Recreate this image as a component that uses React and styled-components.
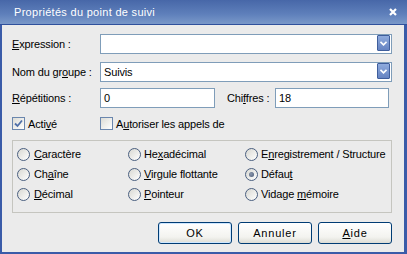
import React from "react";
import styled, { createGlobalStyle } from "styled-components";

const GlobalStyle = createGlobalStyle`
  html, body {
    margin: 0;
    padding: 0;
    background: #ebebeb;
  }
  body {
    font-family: "Liberation Sans", Arial, sans-serif;
    font-size: 11px;
    letter-spacing: -0.15px;
    color: #000;
  }
`;

const Window = styled.div`
  width: 407px;
  height: 254px;
  display: flex;
  flex-direction: column;
  box-sizing: border-box;
  background: #ebebeb;
`;

const TitleBar = styled.div`
  flex: none;
  height: 24px;
  display: flex;
  align-items: center;
  justify-content: space-between;
  padding: 0 10px 0 14px;
  background: linear-gradient(#4767a8, #5f80bb 60%, #7a98c9);
  border-bottom: 1px solid #2f509c;
  color: #fff;
  font-size: 11px;
  letter-spacing: 0.3px;
`;

const Close = styled.svg`
  width: 8px;
  height: 8px;
`;

const Body = styled.div`
  flex: 1;
  display: flex;
  flex-direction: column;
  padding: 9px 12px 0 10px;
  border-left: 2px solid #3a5ba8;
  border-right: 3px solid #3a5ba8;
  border-bottom: 2px solid #3a5ba8;
`;

const Row = styled.div`
  display: flex;
  align-items: center;
  height: ${({ $h }) => $h || 20}px;
  margin-top: ${({ $top }) => $top || 0}px;
`;

const Label = styled.label`
  flex: none;
  width: ${({ $w }) => $w}px;
  margin-left: ${({ $ml }) => $ml || 0}px;
  white-space: nowrap;
`;

const Text = styled.span`
  white-space: pre;
`;

const U = styled.span`
  text-decoration: underline;
  text-underline-offset: 1px;
`;

const Field = styled.div`
  position: relative;
  box-sizing: border-box;
  height: 20px;
  flex: ${({ $w }) => ($w ? "none" : 1)};
  width: ${({ $w }) => ($w ? `${$w}px` : "auto")};
  margin-right: ${({ $mr }) => $mr || 0}px;
  border: 1px solid #7f9db9;
  background: #fff;
  display: flex;
  align-items: center;
  padding-left: 3px;
`;

const DropButton = styled.div`
  position: absolute;
  right: 1px;
  top: 0px;
  width: 13px;
  height: 16px;
  box-sizing: border-box;
  border: 1px solid #3f5e9c;
  border-radius: 1px;
  background: linear-gradient(#8fabdd, #6583c2);
  display: flex;
  align-items: center;
  justify-content: center;
`;

const Check = styled.div`
  flex: none;
  width: 13px;
  height: 13px;
  box-sizing: border-box;
  border: 1px solid #6a86ad;
  background: linear-gradient(135deg, #dcdcd6, #fff);
  display: flex;
  align-items: center;
  justify-content: center;
  margin-right: 3px;
`;

const CheckItem = styled.div`
  display: flex;
  align-items: center;
  width: ${({ $w }) => ($w ? `${$w}px` : "auto")};
  white-space: nowrap;
`;

const Group = styled.div`
  box-sizing: border-box;
  height: 73px;
  margin-top: 10px;
  border: 1px solid #c5c5bf;
  display: grid;
  grid-template-columns: 111px 117px 1fr;
  grid-auto-rows: 20px;
  padding: 3px 0 0 4px;
`;

const RadioItem = styled.div`
  display: flex;
  align-items: center;
  white-space: nowrap;
`;

const Radio = styled.div`
  flex: none;
  width: 13px;
  height: 13px;
  box-sizing: border-box;
  border-radius: 50%;
  border: 1px solid #4a5f80;
  background: linear-gradient(135deg, #d8d8d2, #fff);
  margin-right: ${({ $gap }) => $gap}px;
  display: flex;
  align-items: center;
  justify-content: center;
`;

const Dot = styled.div`
  width: 5px;
  height: 5px;
  border-radius: 50%;
  background: radial-gradient(circle at 40% 40%, #8a97ad, #4b5a76);
`;

const Footer = styled.div`
  display: flex;
  justify-content: flex-end;
  gap: 6px;
  margin-top: 9px;
`;

const Button = styled.div`
  width: 74px;
  height: 22px;
  box-sizing: border-box;
  border: 1px solid #003c74;
  border-radius: 3px;
  background: linear-gradient(#ffffff, #f3f3ef 70%, #dcdcd5);
  box-shadow: ${({ $default }) =>
    $default ? "inset 0 0 0 1px #cee7ff" : "none"};
  display: flex;
  align-items: center;
  justify-content: center;
  letter-spacing: 0.8px;
`;

const Chevron = () => (
  <svg width="7" height="5" viewBox="0 0 7 5">
    <path d="M0.5 0.8 L3.5 3.8 L6.5 0.8" fill="none" stroke="#fff" strokeWidth="1.6" />
  </svg>
);

const CheckMark = () => (
  <svg width="9" height="9" viewBox="0 0 9 9">
    <path d="M1 4.5 L3.5 7 L8 1.5" fill="none" stroke="#4f6fa8" strokeWidth="1.8" />
  </svg>
);

const radios = [
  [<><U>C</U>aractère</>, 4],
  [<>He<U>x</U>adécimal</>, 3],
  [<>E<U>n</U>registrement / Structure</>, 3],
  [<>Ch<U>a</U>îne</>, 4],
  [<><U>V</U>irgule flottante</>, 3],
  [<>Défau<U>t</U></>, 3, true],
  [<><U>D</U>écimal</>, 4],
  [<><U>P</U>ointeur</>, 3],
  [<>Vidage <U>m</U>émoire</>, 3],
];

export default function App() {
  return (
    <>
      <GlobalStyle />
      <Window>
        <TitleBar>
          <span>Propriétés du point de suivi</span>
          <Close viewBox="0 0 8 8">
            <path d="M1 1 L7 7 M7 1 L1 7" stroke="#fff" strokeWidth="2.2" />
          </Close>
        </TitleBar>
        <Body>
          <Row>
            <Label $w={88}>
              <U>E</U>xpression :
            </Label>
            <Field>
              <DropButton>
                <Chevron />
              </DropButton>
            </Field>
          </Row>
          <Row $top={8}>
            <Label $w={88}>
              Nom du gr<U>o</U>upe :
            </Label>
            <Field>
              <Text>Suivis</Text>
              <DropButton>
                <Chevron />
              </DropButton>
            </Field>
          </Row>
          <Row $top={6}>
            <Label $w={88}>
              <U>R</U>épétitions :
            </Label>
            <Field $w={115}>
              <Text>0</Text>
            </Field>
            <Label $w={48} $ml={12}>
              Chi<U>f</U>fres :
            </Label>
            <Field $mr={3}>
              <Text>18</Text>
            </Field>
          </Row>
          <Row $top={9} $h={13}>
            <CheckItem $w={88}>
              <Check>
                <CheckMark />
              </Check>
              <Text>
                Acti<U>v</U>é
              </Text>
            </CheckItem>
            <CheckItem>
              <Check />
              <Text>
                A<U>u</U>toriser les appels de
              </Text>
            </CheckItem>
          </Row>
          <Group>
            {radios.map(([label, gap, on], i) => (
              <RadioItem key={i}>
                <Radio $gap={gap}>{on && <Dot />}</Radio>
                <Text>{label}</Text>
              </RadioItem>
            ))}
          </Group>
          <Footer>
            <Button $default>OK</Button>
            <Button>Annuler</Button>
            <Button>
              <Text>
                <U>A</U>ide
              </Text>
            </Button>
          </Footer>
        </Body>
      </Window>
    </>
  );
}
